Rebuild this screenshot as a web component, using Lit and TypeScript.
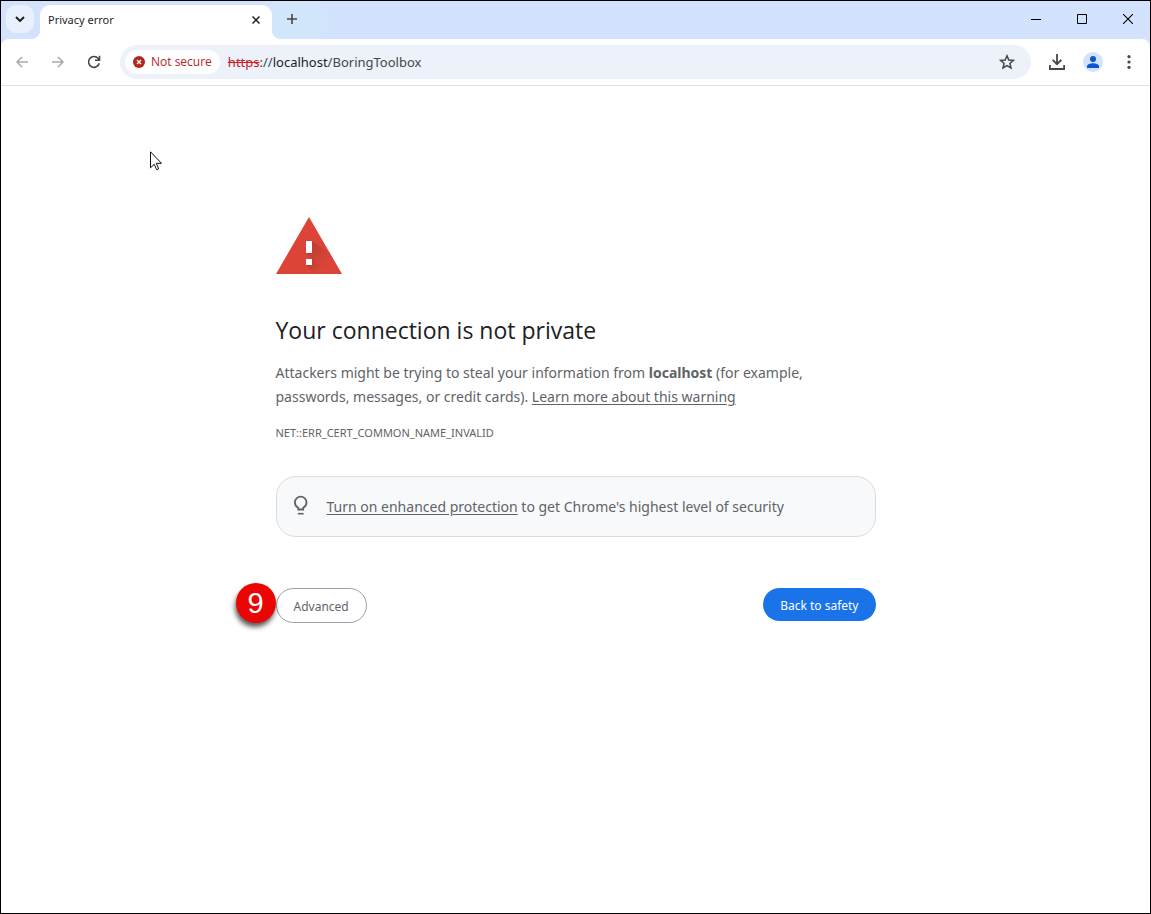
import { LitElement, html, css } from "lit";
import { customElement, state } from "lit/decorators.js";

@customElement("tab-strip")
class TabStrip extends LitElement {
  static styles = css`
    :host {
      display: flex;
      align-items: flex-start;
      height: 38px;
      padding-left: 5px;
      background: #d3e3fd;
      font: 11px/16px "Noto Sans", sans-serif;
      color: #1f1f1f;
    }
    button {
      display: grid;
      place-items: center;
      padding: 0;
      border: 0;
      background: none;
      color: inherit;
    }
    svg {
      display: block;
    }
    .search {
      width: 28px;
      height: 28px;
      margin-top: 4px;
      border-radius: 10px;
      background: #e9f1fe;
    }
    .tab {
      position: relative;
      display: flex;
      align-items: center;
      justify-content: space-between;
      box-sizing: border-box;
      width: 232px;
      height: 34px;
      margin: 4px 0 0 6px;
      padding: 0 8px 4px;
      border-radius: 10px 10px 0 0;
      background: #fff;
    }
    .tab::before,
    .tab::after {
      content: "";
      position: absolute;
      bottom: 0;
      width: 10px;
      height: 10px;
    }
    .tab::before {
      right: 100%;
      background: radial-gradient(circle at 0 0, transparent 10px, #fff 11px);
    }
    .tab::after {
      left: 100%;
      background: radial-gradient(circle at 100% 0, transparent 10px, #fff 11px);
    }
    .close {
      width: 16px;
      height: 16px;
    }
    .rest {
      display: flex;
      flex: 1;
      justify-content: space-between;
      height: 38px;
      background: linear-gradient(90deg, #d1e5fb 50px, #d3e3fd 54px);
    }
    .new {
      width: 28px;
      height: 28px;
      margin: 4px 0 0 6px;
      color: #474747;
    }
    .controls {
      display: flex;
    }
    .controls button {
      width: 46px;
      height: 36px;
      padding-left: 2px;
      color: #000;
    }
  `;

  render() {
    return html`
      <button class="search" aria-label="Search tabs">
        <svg width="10" height="6" viewBox="0 0 10 6" fill="none" stroke="currentColor" stroke-width="2"><path d="M1 1l4 4 4-4" /></svg>
      </button>
      <div class="tab">
        <span>Privacy error</span>
        <button class="close" aria-label="Close tab">
          <svg width="8" height="8" viewBox="0 0 8 8" stroke="currentColor" stroke-width="1.5"><path d="M.5.5l7 7M7.5.5l-7 7" /></svg>
        </button>
      </div>
      <div class="rest">
        <button class="new" aria-label="New tab">
          <svg width="10" height="10" viewBox="0 0 10 10" stroke="currentColor" stroke-width="1.6"><path d="M5 0v10M0 5h10" /></svg>
        </button>
        <div class="controls">
          <button aria-label="Minimize">
            <svg width="10" height="10" viewBox="0 0 10 10" shape-rendering="crispEdges"><path d="M0 5h10v1H0z" /></svg>
          </button>
          <button aria-label="Maximize">
            <svg width="10" height="10" viewBox="0 0 10 10" fill="none" stroke="currentColor"><path d="M.5.5h9v9h-9z" /></svg>
          </button>
          <button aria-label="Close">
            <svg width="10" height="10" viewBox="0 0 10 10" stroke="currentColor" stroke-width="1.1"><path d="M0 0l10 10M10 0L0 10" /></svg>
          </button>
        </div>
      </div>
    `;
  }
}

@customElement("nav-toolbar")
class NavToolbar extends LitElement {
  @state() private editing = false;

  static styles = css`
    :host {
      display: block;
      background: #d3e3fd;
      font: 13px/20px "Noto Sans", sans-serif;
      color: #474747;
    }
    .bar {
      display: flex;
      align-items: center;
      height: 46px;
      padding: 0 3px;
      border-bottom: 1px solid #dfe1e3;
      border-radius: 8px 8px 0 0;
      background: #fff;
    }
    button {
      display: grid;
      place-items: center;
      width: 36px;
      height: 34px;
      padding: 0;
      border: 0;
      background: none;
      color: inherit;
      font: inherit;
    }
    button:disabled {
      color: #aaa;
    }
    svg {
      display: block;
    }
    .omnibox {
      display: flex;
      align-items: center;
      flex: 1;
      height: 34px;
      margin: 0 8px;
      padding: 0 5px;
      border-radius: 17px;
      background: #edf1fa;
    }
    .omnibox .chip {
      display: flex;
      align-items: center;
      gap: 6px;
      width: auto;
      height: 24px;
      padding: 0 8px;
      border-radius: 12px;
      background: #fff;
      color: #b3261e;
      font: 500 12px/20px "Open Sans", sans-serif;
    }
    .address {
      display: grid;
      flex: 1;
      align-items: center;
      margin-left: 8px;
    }
    .address > * {
      grid-area: 1 / 1;
    }
    input {
      width: 100%;
      padding: 0;
      border: 0;
      outline: 0;
      background: none;
      color: #1f1f1f;
      font: inherit;
    }
    .url {
      pointer-events: none;
    }
    .scheme {
      color: #c5221f;
    }
    .host {
      color: #1f1f1f;
    }
    .omnibox .star {
      width: 24px;
      margin-right: 7px;
    }
  `;

  render() {
    return html`
      <div class="bar">
        <button disabled aria-label="Back">
          <svg width="12" height="12" viewBox="0 0 12 12" fill="none" stroke="currentColor" stroke-width="1.5"><path d="M12 6H1M6 1L1 6l5 5" /></svg>
        </button>
        <button disabled aria-label="Forward">
          <svg width="12" height="12" viewBox="0 0 12 12" fill="none" stroke="currentColor" stroke-width="1.5"><path d="M0 6h11M6 1l5 5-5 5" /></svg>
        </button>
        <button aria-label="Reload">
          <svg width="14" height="14" viewBox="0 0 14 14" fill="none" stroke="currentColor" stroke-width="1.6"><path d="M12.2 8.2A5.4 5.4 0 1 1 11.2 3.6L12.4 5M12.5.8v4.4H8" /></svg>
        </button>
        <div class="omnibox">
          <button class="chip">
            <svg width="12" height="12" viewBox="0 0 12 12"><circle cx="6" cy="6" r="6" fill="#b3261e" /><path d="M4 4l4 4M8 4L4 8" stroke="#fff" stroke-width="1.3" /></svg>
            Not secure
          </button>
          <div class="address">
            <input
              aria-label="Address and search bar"
              @focus=${this.startEdit}
              @blur=${this.endEdit}
            />
            ${this.editing
              ? null
              : html`<span class="url"><s class="scheme">https</s>://<span class="host">localhost</span>/BoringToolbox</span>`}
          </div>
          <button class="star" aria-label="Bookmark this tab">
            <svg width="16" height="16" viewBox="0 0 16 16" fill="none" stroke="currentColor" stroke-width="1.5"><path d="M8 1.8l1.8 4.2 4.6.4-3.5 3 1.1 4.5L8 11.5l-4 2.4 1.1-4.5-3.5-3L6.2 6z" /></svg>
          </button>
        </div>
        <button aria-label="Downloads">
          <svg width="16" height="16" viewBox="0 0 16 16" fill="none" stroke="currentColor" stroke-width="1.8"><path d="M8 0v10M3.6 5.8L8 10.2l4.4-4.4M.9 11v4h14.2v-4" /></svg>
        </button>
        <button aria-label="Profile">
          <svg width="20" height="20" viewBox="0 0 20 20"><circle cx="10" cy="10" r="10" fill="#d3e3fd" /><circle cx="10" cy="7" r="3" fill="#0b57d0" /><path d="M4 16v-1.6C4 12.3 7.500 11.3 10 11.3s6 1 6 3.1V16z" fill="#0b57d0" /></svg>
        </button>
        <button aria-label="Menu">
          <svg width="4" height="14" viewBox="0 0 4 14" fill="currentColor"><circle cx="2" cy="1.7" r="1.6" /><circle cx="2" cy="7" r="1.6" /><circle cx="2" cy="12.3" r="1.6" /></svg>
        </button>
      </div>
    `;
  }

  private startEdit(e: FocusEvent) {
    this.editing = true;
    (e.target as HTMLInputElement).value = "https://localhost/BoringToolbox";
  }

  private endEdit(e: FocusEvent) {
    this.editing = false;
    (e.target as HTMLInputElement).value = "";
  }
}

@customElement("privacy-warning")
class PrivacyWarning extends LitElement {
  static styles = css`
    :host {
      display: block;
      max-width: 600px;
      margin: 0 auto;
      padding-top: 131px;
      color: #5f6368;
      font: 14px/24px "Noto Sans", sans-serif;
    }
    svg {
      display: block;
    }
    h1 {
      margin: 41px 0 16px;
      color: #202124;
      font: 400 23px/30px "Open Sans", sans-serif;
    }
    p {
      max-width: 550px;
      margin: 0;
    }
    a {
      color: inherit;
      text-underline-offset: 2px;
    }
    .code {
      margin-top: 12px;
      font-size: 11px;
    }
    .tip {
      display: flex;
      align-items: flex-start;
      gap: 18px;
      margin-top: 31px;
      padding: 18px 16px 17px;
      border: 1px solid #dadce0;
      border-radius: 20px;
      background: #f8f9fb;
    }
    .actions {
      display: flex;
      align-items: flex-start;
      justify-content: space-between;
      margin-top: 51px;
    }
    .slot {
      position: relative;
      display: flex;
    }
    button {
      padding: 9px 17px 7px;
      border: 0;
      border-radius: 18px;
      background: #1a73e8;
      color: #fff;
      font: 12px/17px "Noto Sans", sans-serif;
    }
    .plain {
      border: 1px solid #9aa0a6;
      background: #fff;
      color: #5f6368;
    }
    .step {
      position: absolute;
      right: 100%;
      top: -5px;
      width: 40px;
      height: 40px;
      border-radius: 50%;
      background: #eb0505;
      box-shadow: -1px 4px 5px rgba(0, 0, 0, 0.65);
      color: #fff;
      font: 29px/41px "Liberation Sans", sans-serif;
      text-align: center;
    }
  `;

  render() {
    return html`
      <svg width="66" height="57" viewBox="0 0 66 57" role="img" aria-label="Warning">
        <defs>
          <linearGradient id="shade" x1="33" y1="27" x2="54" y2="48" gradientUnits="userSpaceOnUse">
            <stop offset="0" stop-color="#262626" stop-opacity=".2" />
            <stop offset=".7" stop-color="#262626" stop-opacity=".03" />
            <stop offset="1" stop-color="#262626" stop-opacity="0" />
          </linearGradient>
          <linearGradient id="shade2" x1="32" y1="45" x2="42" y2="55" gradientUnits="userSpaceOnUse">
            <stop offset="0" stop-color="#262626" stop-opacity=".22" />
            <stop offset="1" stop-color="#262626" stop-opacity="0" />
          </linearGradient>
        </defs>
        <path d="M33 0l33 57H0z" fill="#db4437" />
        <path d="M36 24l17.5 12L66 57H51L30 36z" fill="url(#shade)" />
        <path d="M36 42l15 15H39L30 48z" fill="url(#shade2)" />
        <path d="M30 24h6v12h-6zM30 42h6v6h-6z" fill="#fff" />
      </svg>
      <h1>Your connection is not private</h1>
      <p>
        Attackers might be trying to steal your information from
        <strong>localhost</strong> (for example, passwords, messages, or credit cards).
        <a href="#">Learn more about this warning</a>
      </p>
      <p class="code">NET::ERR_CERT_COMMON_NAME_INVALID</p>
      <div class="tip">
        <svg width="16" height="22" viewBox="0 0 16 22" fill="none" stroke="#5f6368" stroke-width="1.8">
          <path d="M5.2 14.5V12.7C3.2 11.6 1.9 9.8 1.9 7.4a5.8 5.8 0 0 1 11.6 0c0 2.4-1.3 4.2-3.3 5.3v1.8z" />
          <path d="M4.8 18.7h5.8" stroke-width="1.6" />
        </svg>
        <span><a href="#">Turn on enhanced protection</a> to get Chrome's highest level of security</span>
      </div>
      <div class="actions">
        <div class="slot">
          <button class="plain">Advanced</button>
          <span class="step">9</span>
        </div>
        <button>Back to safety</button>
      </div>
    `;
  }
}

@customElement("app-root")
class AppRoot extends LitElement {
  static styles = css`
    :host {
      position: relative;
      display: block;
      box-sizing: border-box;
      min-height: 100vh;
      border: 1px solid #000;
      background: #fff;
    }
    .pointer {
      position: absolute;
      left: 149px;
      top: 150px;
    }
  `;

  render() {
    return html`
      <tab-strip></tab-strip>
      <nav-toolbar></nav-toolbar>
      <privacy-warning></privacy-warning>
      <svg class="pointer" width="12" height="20" viewBox="0 0 12 20" fill="#fff" stroke="#10101c" aria-hidden="true">
        <path d="M.5.8v16l3.7-3.5 2.5 5.4 2-.9-2.4-5.5h5.2z" />
      </svg>
    `;
  }
}
